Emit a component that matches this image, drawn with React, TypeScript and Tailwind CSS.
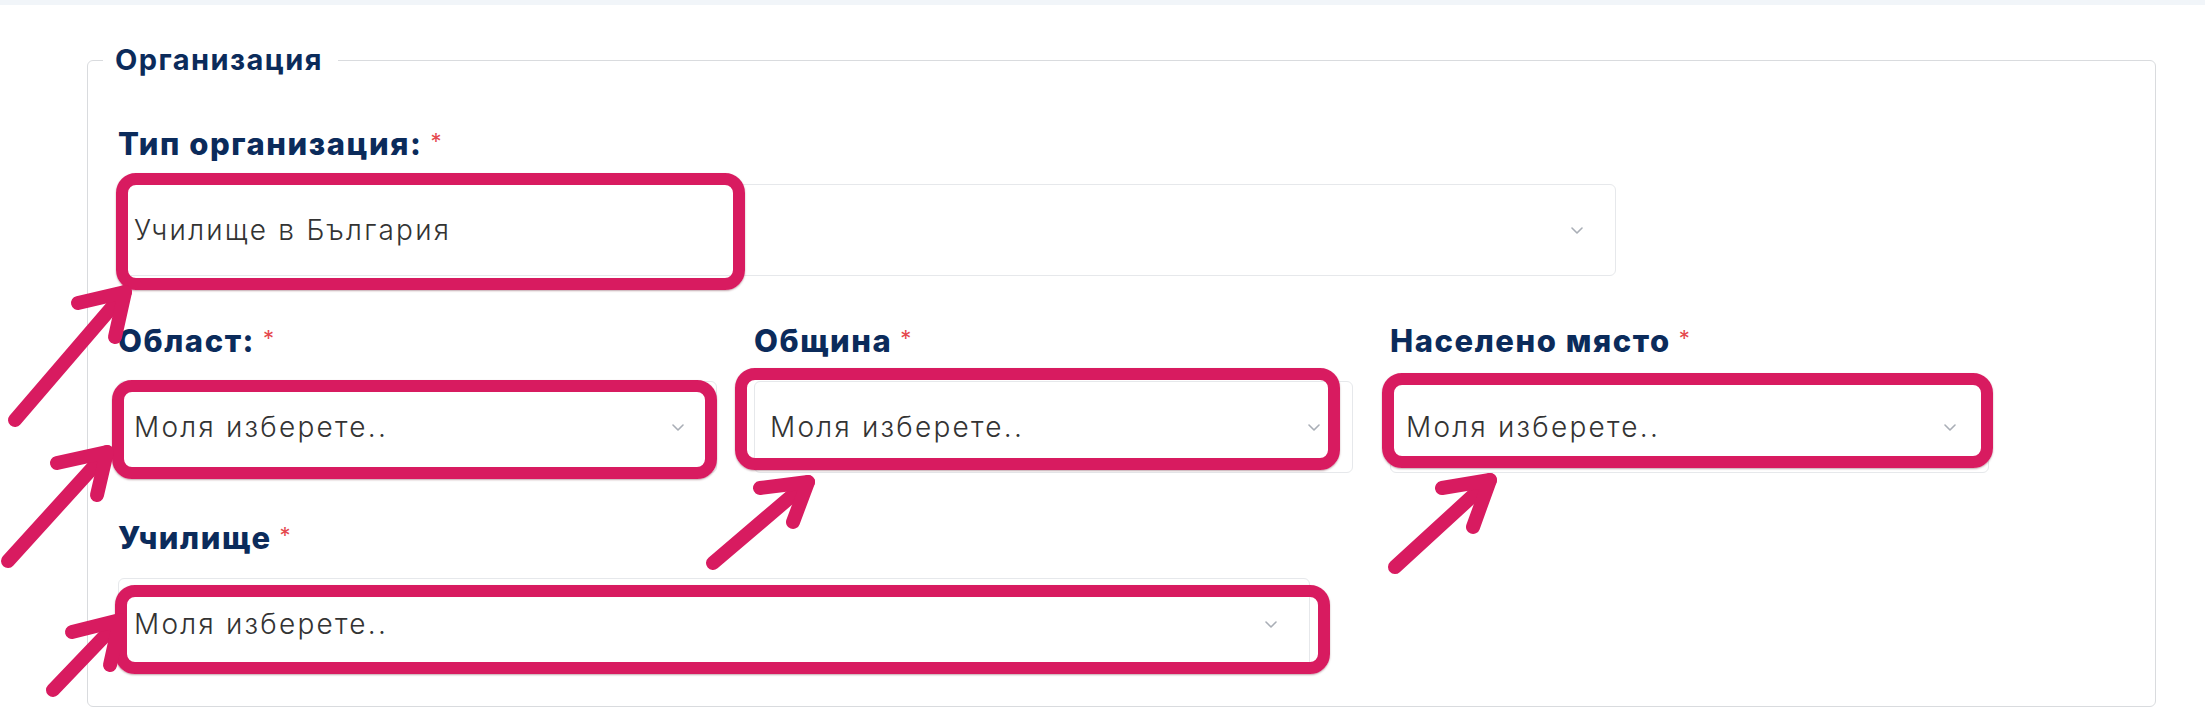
import React from "react";

const PINK = "#d81b60";

function Chevron() {
  return (
    <svg width="12" height="7" viewBox="0 0 12 7" className="shrink-0">
      <path d="M1 1 L6 6 L11 1" fill="none" stroke="#a9aeb6" strokeWidth="1.6" strokeLinecap="round" strokeLinejoin="round" />
    </svg>
  );
}

function Label({ text }: { text: string }) {
  return (
    <div className="h-[36px] leading-[36px] text-[31px] tracking-[0.05em] font-extrabold text-[#0b2b5b] whitespace-nowrap">
      {text}
      <span className="ml-[8px] align-top text-[22px] leading-[30px] tracking-normal font-normal text-[#e5484d]">*</span>
    </div>
  );
}

function Select({ value, width }: { value: string; width: string }) {
  return (
    <div className={`mt-[22px] h-[92px] ${width} flex items-center justify-between rounded-[6px] border border-[#e6e8eb] bg-white pl-[15px] pr-[32px]`}>
      <span className="text-[28px] tracking-[0.08em] font-light text-[#333333] whitespace-nowrap">{value}</span>
      <Chevron />
    </div>
  );
}

function Arrow({ tail, tip, a, b }: { tail: [number, number]; tip: [number, number]; a: [number, number]; b: [number, number] }) {
  return (
    <g>
      <path d={`M${tail[0]} ${tail[1]} L${tip[0]} ${tip[1]}`} />
      <path d={`M${a[0]} ${a[1]} L${tip[0]} ${tip[1]} L${b[0]} ${b[1]}`} />
    </g>
  );
}

export default function App() {
  const font = { fontFamily: "Inter, 'Noto Sans', 'Open Sans', sans-serif" };
  return (
    <div lang="bg" className="relative w-[2205px] h-[712px] overflow-hidden bg-white" style={font}>
      <div className="h-[5px] bg-[#f1f5f9]" />
      <div className="pl-[87px] pr-[49px] pt-[38px]">
        <fieldset className="h-[664px] rounded-[6px] border border-[#d9dbde] p-0">
          <legend className="ml-[15px] pl-[12px] pr-[15px] text-[29px] tracking-[0.05em] leading-[34px] font-bold text-[#0b2b5b]">
            Организация
          </legend>
          <div className="pl-[30px] pt-[49px]">
            <div>
              <Label text="Тип организация:" />
              <Select value="Училище в България" width="w-[1498px]" />
            </div>
            <div className="mt-[47px] grid grid-cols-[599px_599px_599px] gap-x-[37px]">
              <div>
                <Label text="Област:" />
                <Select value="Моля изберете.." width="w-[599px]" />
              </div>
              <div>
                <Label text="Община" />
                <Select value="Моля изберете.." width="w-[599px]" />
              </div>
              <div>
                <Label text="Населено място" />
                <Select value="Моля изберете.." width="w-[599px]" />
              </div>
            </div>
            <div className="mt-[47px]">
              <Label text="Училище" />
              <Select value="Моля изберете.." width="w-[1192px]" />
            </div>
          </div>
        </fieldset>
      </div>

      {/* annotation boxes */}
      <div className="absolute left-[116px] top-[173px] w-[629px] h-[117px] rounded-[20px] border-[12px] border-[#d81b60] shadow-[0_1px_2px_rgba(80,0,20,0.35)]" />
      <div className="absolute left-[112px] top-[380px] w-[605px] h-[99px] rounded-[20px] border-[12px] border-[#d81b60] shadow-[0_1px_2px_rgba(80,0,20,0.35)]" />
      <div className="absolute left-[735px] top-[368px] w-[605px] h-[102px] rounded-[20px] border-[12px] border-[#d81b60] shadow-[0_1px_2px_rgba(80,0,20,0.35)]" />
      <div className="absolute left-[1382px] top-[373px] w-[611px] h-[95px] rounded-[20px] border-[12px] border-[#d81b60] shadow-[0_1px_2px_rgba(80,0,20,0.35)]" />
      <div className="absolute left-[115px] top-[585px] w-[1215px] h-[89px] rounded-[20px] border-[12px] border-[#d81b60] shadow-[0_1px_2px_rgba(80,0,20,0.35)]" />

      {/* annotation arrows */}
      <svg className="absolute inset-0 pointer-events-none" width="2205" height="712" viewBox="0 0 2205 712">
        <g fill="none" stroke={PINK} strokeWidth="14" strokeLinecap="round" strokeLinejoin="round">
          <Arrow tail={[15, 420]} tip={[125, 292]} a={[78, 303]} b={[115, 337]} />
          <Arrow tail={[8, 561]} tip={[107, 452]} a={[57, 463]} b={[97, 495]} />
          <Arrow tail={[53, 690]} tip={[120, 620]} a={[72, 632]} b={[110, 665]} />
          <Arrow tail={[713, 563]} tip={[808, 482]} a={[760, 488]} b={[793, 522]} />
          <Arrow tail={[1395, 567]} tip={[1490, 480]} a={[1442, 488]} b={[1473, 527]} />
        </g>
      </svg>
    </div>
  );
}
